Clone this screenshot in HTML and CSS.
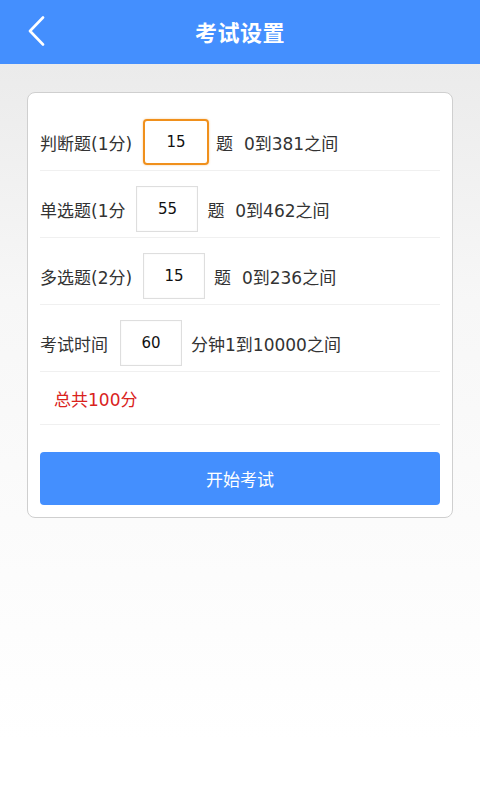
FILE: index.html
```html
<!DOCTYPE html>
<html lang="zh">
<head>
<meta charset="utf-8">
<title>考试设置</title>
<link rel="stylesheet" href="styles.css">
</head>
<body>
<header class="bar">
  <a class="back" href="#" aria-label="返回">
    <svg width="18" height="30" viewBox="0 0 18 30"><path d="M16 1.5 L3 15 L16 28.5" fill="none" stroke="#fff" stroke-width="2.6" stroke-linecap="round" stroke-linejoin="round"/></svg>
  </a>
  <h1 class="title">考试设置</h1>
</header>
<main class="page">
  <section class="card">
    <div class="row">
      <span class="label">判断题(1分)</span>
      <span class="box focus">15</span>
      <span class="text">题&nbsp;&nbsp;0到381之间</span>
    </div>
    <div class="row">
      <span class="label">单选题(1分</span>
      <span class="box">55</span>
      <span class="text">题&nbsp;&nbsp;0到462之间</span>
    </div>
    <div class="row">
      <span class="label">多选题(2分)</span>
      <span class="box">15</span>
      <span class="text">题&nbsp;&nbsp;0到236之间</span>
    </div>
    <div class="row">
      <span class="label wide">考试时间</span>
      <span class="box">60</span>
      <span class="text">分钟1到10000之间</span>
    </div>
    <div class="total">总共100分</div>
    <button class="start">开始考试</button>
  </section>
</main>
</body>
</html>
```
FILE: styles.css
```css
* { box-sizing: border-box; }
html, body { margin: 0; padding: 0; }
body {
  width: 480px;
  min-height: 810px;
  font-family: "DejaVu Sans", "Noto Sans CJK SC", sans-serif;
  background: linear-gradient(#ebebeb 64px, #f7f7f7 300px, #ffffff 740px);
  color: #333;
}
.bar {
  height: 64px;
  background: #448ffe;
  display: flex;
  align-items: center;
  justify-content: center;
  position: relative;
}
.back {
  position: absolute;
  left: 27px;
  top: 16px;
  display: block;
  width: 18px;
  height: 30px;
}
.back svg { display: block; }
.title {
  margin: 0 0 3px 0;
  color: #fff;
  font-size: 22px;
  font-weight: bold;
  letter-spacing: 0.5px;
  font-family: "Noto Sans CJK SC", sans-serif;
}
.page {
  padding: 28px 27px 0 27px;
}
.card {
  background: #fff;
  border: 1px solid #cfcfcf;
  border-radius: 8px;
  padding: 11px 12px 12px 12px;
}
.row {
  display: flex;
  align-items: center;
  padding: 15px 0 5px 0;
  border-bottom: 1px solid #f0f0f0;
  height: 67px;
  font-size: 17px;
}
.label { margin-right: 11px; }
.label.wide { margin-right: 12px; }
.box {
  width: 62px;
  height: 46px;
  border: 1px solid #dedede;
  box-shadow: inset 0 0 2px rgba(0,0,0,0.06);
  display: flex;
  align-items: center;
  justify-content: center;
  font-size: 15px;
  color: #111;
  margin-right: 9px;
  padding-bottom: 1px;
}
.box.focus {
  width: 66px;
  border: 2px solid #f0901c;
  border-radius: 4px;
  box-shadow: 0 0 2px rgba(240,144,28,0.5);
  margin-right: 7px;
}
.text { color: #333; }
.total {
  height: 53px;
  display: flex;
  align-items: center;
  padding-left: 14px;
  color: #d9231d;
  font-size: 17px;
  font-weight: normal;
  border-bottom: 1px solid #f0f0f0;
}
.start {
  display: block;
  width: 100%;
  height: 53px;
  margin-top: 27px;
  border: none;
  border-radius: 4px;
  background: #448ffe;
  color: #fff;
  font-family: "DejaVu Sans", "Noto Sans CJK SC", sans-serif;
  font-size: 17px;
}
```
